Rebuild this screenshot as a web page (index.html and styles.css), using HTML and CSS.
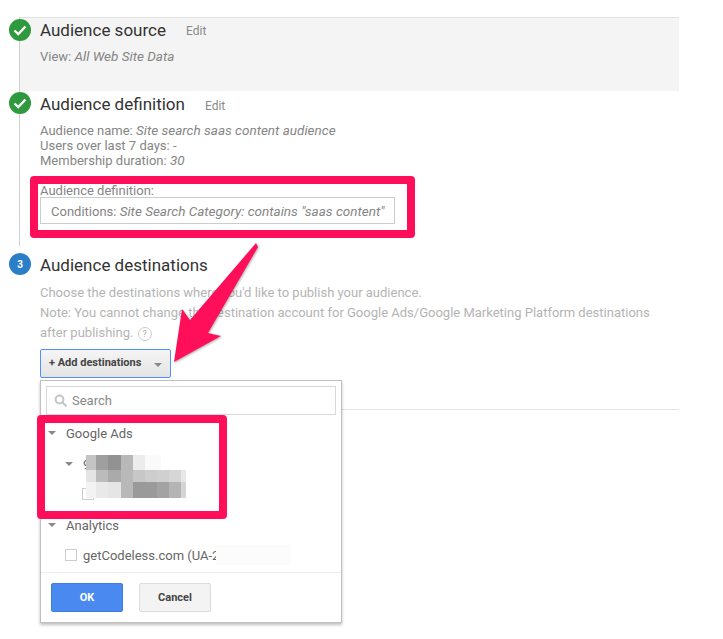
FILE: index.html
```html
<!DOCTYPE html>
<html lang="en">
<head>
<meta charset="utf-8">
<title>Audience destinations</title>
<link rel="stylesheet" href="styles.css">
</head>
<body>
<main class="page">
  <section class="step step-source">
    <span class="marker marker-done"><svg viewBox="0 0 22 22" class="check"><path d="M5.5 11.5l3.8 3.6 7.2-7.6"/></svg></span>
    <div class="step-head"><h2 class="title">Audience source</h2><a class="edit">Edit</a></div>
    <p class="info">View: <em>All Web Site Data</em></p>
  </section>
  <section class="step step-definition">
    <span class="marker marker-done"><svg viewBox="0 0 22 22" class="check"><path d="M5.5 11.5l3.8 3.6 7.2-7.6"/></svg></span>
    <div class="step-head"><h2 class="title">Audience definition</h2><a class="edit">Edit</a></div>
    <p class="info">Audience name: <em>Site search saas content audience</em><br>Users over last 7 days: -<br>Membership duration: <em>30</em></p>
    <p class="info def-label">Audience definition:</p>
    <div class="conditions">Conditions: <em>Site Search Category: contains "saas content"</em></div>
  </section>
  <section class="step step-destinations">
    <span class="marker marker-current">3</span>
    <div class="step-head"><h2 class="title">Audience destinations</h2></div>
    <p class="note">Choose the destinations where you'd like to publish your audience.<br>Note: You cannot change the destination account for Google Ads/Google Marketing Platform destinations<br>after publishing. <span class="help">?</span></p>
    <button class="add-btn"><span class="add-label">+ Add destinations</span><span class="caret caret-btn"></span></button>
    <hr class="rule">
    <div class="dropdown">
      <div class="search">
        <svg class="search-icon" viewBox="0 0 14 14"><circle cx="5.5" cy="5.5" r="3.9"/><path d="M8.5 8.5l4 4"/></svg>
        <span>Search</span>
      </div>
      <div class="tree">
        <div class="tree-row row-ads"><span class="caret"></span>Google Ads</div>
        <div class="tree-row row-account"><span class="caret"></span>9</div>
        <div class="tree-row row-sub"><span class="box"></span></div>
        <div class="tree-row row-analytics"><span class="caret"></span>Analytics</div>
        <div class="tree-row row-code"><span class="box"></span>getCodeless.com (UA-2<span class="fade"></span></div>
      </div>
      <div class="actions">
        <button class="btn btn-ok">OK</button>
        <button class="btn btn-cancel">Cancel</button>
      </div>
    </div>
  </section>
</main>

<svg class="mosaic" viewBox="0 0 100 43" aria-hidden="true">
  <rect x="0" y="0" width="75" height="15" fill="#fafafa"/>
  <rect x="0" y="0" width="10" height="15" fill="#c4c4c4"/>
  <rect x="10" y="0" width="12" height="15" fill="#9f9f9f"/>
  <rect x="22" y="0" width="13" height="15" fill="#929292"/>
  <rect x="35" y="0" width="12" height="15" fill="#b8b8b8"/>
  <rect x="47" y="0" width="12" height="15" fill="#ececec"/>
  <rect x="0" y="15" width="10" height="12" fill="#e4e4e4"/>
  <rect x="10" y="15" width="12" height="12" fill="#bbbbbb"/>
  <rect x="22" y="15" width="13" height="12" fill="#aaaaaa"/>
  <rect x="35" y="15" width="12" height="12" fill="#b9b9b9"/>
  <rect x="47" y="15" width="12" height="12" fill="#c7c7c7"/>
  <rect x="59" y="15" width="12" height="12" fill="#cdcdcd"/>
  <rect x="71" y="15" width="12" height="12" fill="#d0d0d0"/>
  <rect x="83" y="15" width="12" height="12" fill="#d6d6d6"/>
  <rect x="95" y="15" width="5" height="12" fill="#e8e8e8"/>
  <rect x="0" y="27" width="10" height="16" fill="#f3f3f3"/>
  <rect x="10" y="27" width="12" height="16" fill="#e9e9e9"/>
  <rect x="22" y="27" width="13" height="16" fill="#e5e5e5"/>
  <rect x="35" y="27" width="12" height="16" fill="#b8b8b8"/>
  <rect x="47" y="27" width="24" height="16" fill="#9a9a9a"/>
  <rect x="71" y="27" width="12" height="16" fill="#a3a3a3"/>
  <rect x="83" y="27" width="12" height="16" fill="#b4b4b4"/>
  <rect x="95" y="27" width="5" height="16" fill="#d4d4d4"/>
</svg>
<div class="callout callout-def"></div>
<div class="callout callout-ads"></div>
<svg class="arrow" viewBox="0 0 723 639" aria-hidden="true">
  <polygon points="256,243 258,247 208,333 221,336 174,362 182,309 190,320"/>
</svg>
</body>
</html>
```

FILE: styles.css
```css
* { box-sizing: border-box; }
html, body { margin: 0; padding: 0; background: #fff; }
body { width: 723px; height: 639px; overflow: hidden; position: relative; font-family: Roboto, sans-serif; color: #888; }
.page { width: 679px; padding-top: 17px; margin: 0; }
.step { position: relative; margin-left: 19px; padding-left: 20px; border-left: 1px solid #d0d0d0; }
.step-source { height: 74px; background: #f4f4f4; border-top: 1px solid #e2e2e2; padding-top: 1px; }
.step-definition { height: 155px; padding-top: 2px; }
.step-destinations { border-left: 0; padding-left: 21px; padding-top: 8px; height: 393px; }
.marker { position: absolute; left: -11px; width: 22px; height: 22px; border-radius: 50%; display: flex; align-items: center; justify-content: center; }
.step-source .marker { top: 1px; }
.step-definition .marker { top: 1px; }
.step-destinations .marker { top: 7px; left: -10px; }
.marker-done { background: #2f9a3d; }
.marker-current { background: #2a7fc8; color: #fff; font-size: 10px; font-weight: 700; }
.check { width: 22px; height: 22px; fill: none; stroke: #fff; stroke-width: 2.4; }
.step-head { display: flex; align-items: center; height: 22px; }
.title { margin: 0; font-size: 17px; font-weight: 400; color: #333; }
.edit { font-size: 12px; color: #888; margin-left: 20px; margin-top: 2px; }
.step-definition .edit { margin-top: 3px; }
.info { margin: 0; font-size: 13px; line-height: 15px; color: #858585; }
em { font-size: 13.5px; }
.step-source .info { margin-top: 8px; }
.step-definition .info { margin-top: 8px; }
.step-definition .def-label { margin-top: 15px; }
.conditions { margin-top: -1px; width: 355px; height: 27px; border: 1px solid #ccc; padding: 1px 0 0 10px; font-size: 13px; line-height: 25px; color: #858585; white-space: nowrap; }
.note { margin: 7px 0 0; font-size: 13px; line-height: 20px; color: #b4b4b4; width: 625px; }
.help { display: inline-flex; width: 14px; height: 14px; margin-left: 1px; border: 1px solid #ccc; border-radius: 50%; align-items: center; justify-content: center; font-size: 9px; vertical-align: 0; color: #aaa; }
.add-btn { display: flex; align-items: center; width: 131px; height: 29px; margin-top: 6px; padding: 0 0 0 8px; border: 1px solid #4d90fe; border-radius: 2px; background: linear-gradient(#f5f5f5, #e4e4e4); font: 700 11px Roboto, sans-serif; color: #444; }
.add-label { margin-top: -2px; }
.caret { display: inline-block; width: 0; height: 0; border: 4px solid transparent; border-top: 4px solid #888; border-bottom: 0; }
.caret-btn { margin-left: 13px; margin-top: 2px; }
.rule { position: absolute; left: 323px; top: 163px; width: 337px; margin: 0; border: 0; border-top: 1px solid #e4e4e4; }
.dropdown { position: absolute; left: 21px; top: 134px; width: 302px; height: 243px; background: #fff; border: 1px solid #c0c0c0; box-shadow: 0 2px 3px rgba(0,0,0,.25); padding: 5px; display: flex; flex-direction: column; }
.search { display: flex; align-items: center; height: 29px; border: 1px solid #d8d8d8; padding-left: 7px; font-size: 13px; color: #888; gap: 4px; }
.search-icon { width: 14px; height: 14px; fill: none; stroke: #c4c4c4; stroke-width: 2; }
.tree { margin: 0 -5px; flex: 1; position: relative; font-size: 13px; color: #666; }
.tree-row { position: absolute; display: flex; align-items: center; height: 18px; white-space: nowrap; }
.tree-row .caret { margin-right: 10px; }
.row-ads { top: 9px; left: 7px; }
.row-account { top: 40px; left: 24px; }
.row-sub { top: 70px; left: 41px; }
.row-analytics { top: 101px; left: 7px; }
.row-code { top: 131px; left: 24px; }
.box { width: 12px; height: 12px; border: 1px solid #ccc; margin-right: 6px; }
.fade { width: 75px; height: 20px; background: #fcfcfc; margin-left: -3px; }
.actions { margin: 0 -5px -5px; height: 50px; border-top: 1px solid #eee; display: flex; align-items: flex-start; gap: 16px; padding: 10px 0 0 10px; }
.btn { width: 72px; height: 29px; border-radius: 2px; font: 700 11px Roboto, sans-serif; }
.btn-ok { background: #4a8af0; border: 1px solid #3f7fe0; color: #fff; }
.btn-cancel { background: #f3f3f3; border: 1px solid #dcdcdc; color: #444; }
.mosaic { position: absolute; left: 86px; top: 455px; width: 100px; height: 43px; }
.callout { position: absolute; border: 8px solid #ff0f5a; border-radius: 4px; }
.callout-def { left: 30px; top: 176px; width: 385px; height: 62px; }
.callout-ads { left: 37px; top: 415px; width: 190px; height: 104px; }
.arrow { position: absolute; left: 0; top: 0; width: 723px; height: 639px; fill: #ff0f5a; filter: drop-shadow(1px 1px 1px rgba(0,0,0,.3)); pointer-events: none; }
```
